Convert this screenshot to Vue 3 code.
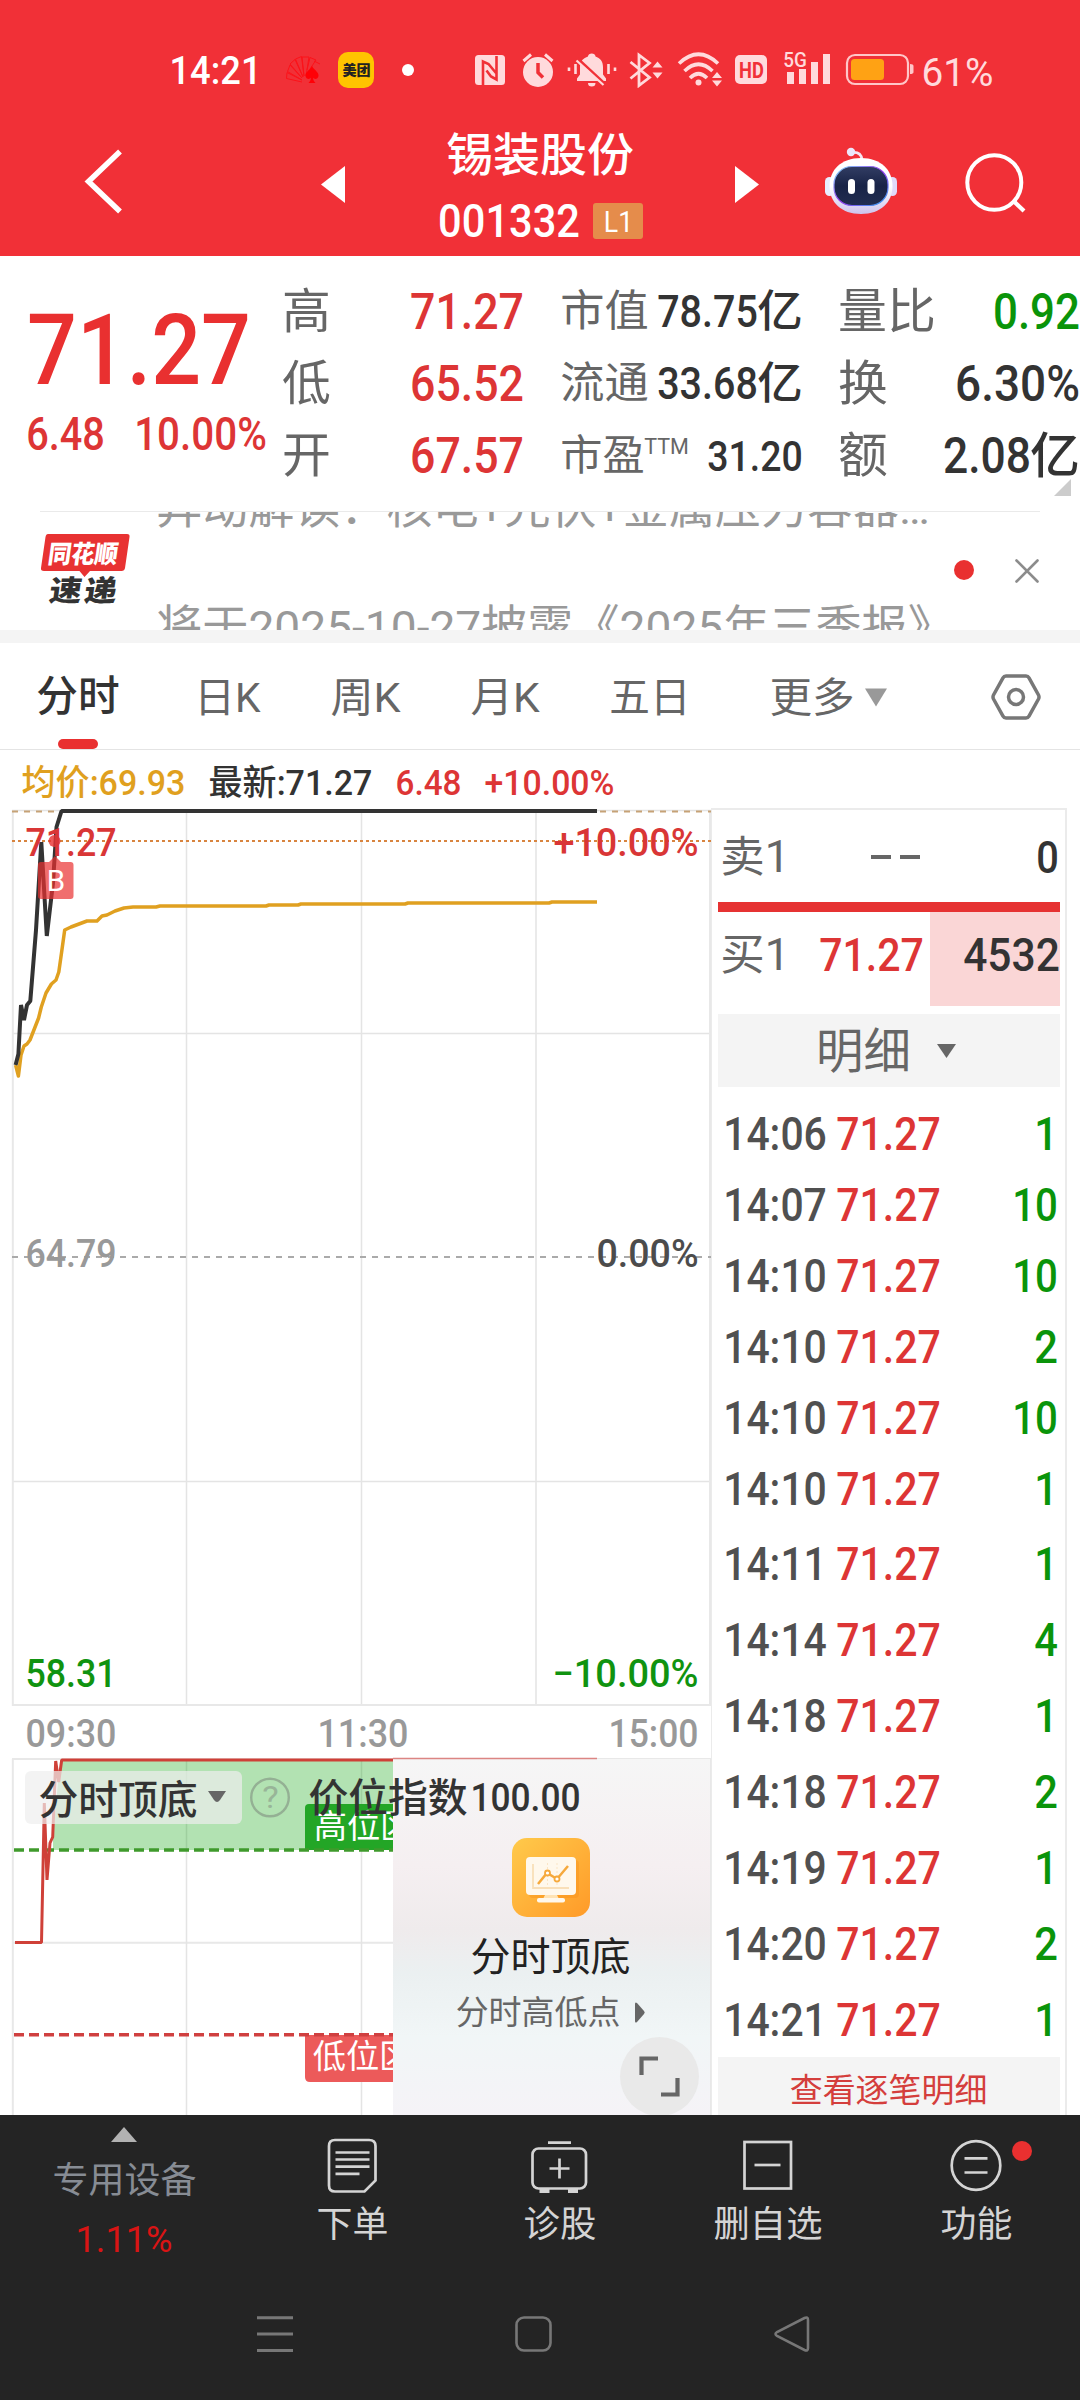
<script setup>
import { h } from 'vue'

// SVG text with a fixed visible width; c is the vertical centre of the glyphs
const Txt = (p) =>
  h('text', {
    x: +p.x - p.s * 0.04,
    y: +p.c + p.s * 0.355,
    textLength: +p.w + p.s * 0.08,
    lengthAdjust: 'spacingAndGlyphs',
    'font-size': p.s,
    fill: p.f || 'currentColor',
    'font-weight': p.b || undefined
  }, p.t)

// The same text in a box of its own, for use in flow layout
const Fit = (p) =>
  h('svg', { width: p.w, height: p.s, overflow: 'visible', display: 'block' },
    [Txt({ ...p, x: 0, c: p.s / 2 })])

const trades = [
  ['14:06', 1], ['14:07', 10], ['14:10', 10], ['14:10', 2], ['14:10', 10], ['14:10', 1],
  ['14:11', 1], ['14:14', 4], ['14:18', 1], ['14:18', 2], ['14:19', 1], ['14:20', 2], ['14:21', 1]
]
const tabs = [
  { t: '日K', w: 63 }, { t: '周K', w: 67 }, { t: '月K', w: 66 }, { t: '五日', w: 78 }
]
const price = '15.6,1065 18.4,1054 21,1005 24,1020 27,1005 30.3,1001 36,930 41.3,842 46.8,936 53,883 56.5,827 61.5,811 597,811'
const average = '15.6,1065 18.4,1076 21,1055 24,1046 27,1044 30,1040 38.6,1018 41.3,1007 46,993 51.4,984 56,980 58.8,972 61.5,953 64.7,930 71,927 87,921 97,921 102,916 107,915 115,911 124,908 133,907 156,907 160,906 266,906 269,905 298,905 301,904 405,904 408,903 549,903 552,902 597,902'
const index = '15,1942.5 41.5,1942.5 44.3,1803 47,1880 50,1843 52.7,1837 55.7,1761 58.7,1782 61.7,1760 393,1760'
</script>

<template>
  <div class="phone">
    <header class="top">
      <div class="status">
        <Fit class="clock" t="14:21" :w="89" :s="38" b="500" />
        <svg class="cards" width="36" height="30" viewBox="285 56 36 30">
          <g fill="none" stroke="#fc1219" stroke-width="1" stroke-linejoin="round">
            <path d="M302 83 286.500 79.500 287 73.500 302 81" />
            <path d="M302 81 287.500 72.500 290 66 302 79" />
            <path d="M302 79 290 65 295 60.500 303 78" />
            <path d="M303 78 295.500 60 301.500 57.500 304 77" />
            <path d="M304 77 302 58 309 58 306 77" />
            <path d="M307 71 310 58.500 316 61 310 70" />
            <path d="M314 62 320 65" />
          </g>
          <path fill="#ff0006" d="M312 67c2 4 7 6 6.500 10-.5 3-4 4-5.500 1.500 0 2 1 4 2.500 5.500h-7c1.500-1.500 2.500-3.500 2.500-5.500-1.500 2.500-5 1.500-5.500-1.500-.5-4 4.500-6 6.500-10z" />
        </svg>
        <span class="meituan"><Fit t="美团" :w="27" :s="14" b="900" /></span>
        <i class="more-dot"></i>
        <svg width="30" height="30" viewBox="475 54 30 30" class="nfc">
          <rect x="475" y="54" width="30" height="30" rx="3.500" fill="#ffdadc" />
          <path d="M483 83V60.500L488.500 63 496 72M496.500 55V78.500L491 75.500 486.500 69.500M483 84v-20" fill="none" stroke="#f13037" stroke-width="2.600" />
        </svg>
        <svg width="34" height="36" viewBox="521 51 34 36" class="alarm">
          <circle cx="538" cy="71" r="15" fill="#ffdadc" />
          <path d="M538 62v9.500l5 5" fill="none" stroke="#f13037" stroke-width="3.500" />
          <path d="M523.500 60l7.500-6.500M552.500 60l-7.500-6.500" stroke="#ffdadc" stroke-width="3" />
        </svg>
        <svg width="50" height="36" viewBox="567 51 50 36" class="bell">
          <path fill="#ffdadc" d="M577 80v-2.500l3-4V66c0-6 3.500-9 8-10.500 0-4 7.500-4 7.500 0 4.500 1.500 7.500 4.500 7.500 10.500v7.500l3 4V80zM588 82h7.500a3.700 3.500 0 0 1-7.500 0z" />
          <path d="M577.500 57.500l28 26" stroke="#f13037" stroke-width="3" />
          <path d="M576.500 59.500l27 24.500" stroke="#ffdadc" stroke-width="2.200" />
          <path d="M575.500 63v10M608.500 63v10M569 66.500v3.500M615 66.500v3.500" stroke="#ffdadc" stroke-width="2.600" />
        </svg>
        <svg width="36" height="36" viewBox="628 51 36 36" class="bt">
          <path d="M630.500 61l19 15.500-10.500 8V54l10.500 8-19 15.500" fill="none" stroke="#ffdadc" stroke-width="2.800" />
          <path fill="#ffdadc" d="M652.500 66.500l5-6 5 6zM652.500 71.500l5 6 5-6z" />
        </svg>
        <svg width="46" height="36" viewBox="677 51 46 36" class="wifi">
          <g fill="none" stroke="#ffdadc" stroke-width="3.600">
            <path d="M679 62.500q19.500-18.500 39 0" /><path d="M684.500 70q14-13.500 28 0" /><path d="M690 77q8.500-8.500 17 0" />
          </g>
          <circle cx="698.500" cy="81.500" r="3" fill="#ffdadc" />
          <path fill="#ffdadc" d="M712 77l5-6 5 6zM712 79.500l5 6 5-6z" />
        </svg>
        <span class="hd"><Fit t="HD" :w="23" :s="22" b="700" /></span>
        <svg width="48" height="36" viewBox="783 50 48 36" class="signal">
          <Txt t="5G" x="784" c="60" w="22" s="20" f="#ffdadc" b="500" />
          <path fill="#ffdadc" d="M787 72h7v12h-7zM799 69h7v15h-7zM811 62h7v22h-7zM823 54h7v30h-7z" />
        </svg>
        <svg width="69" height="33" viewBox="845 53 69 33" class="battery">
          <rect x="847" y="55" width="61" height="29" rx="8" fill="none" stroke="#ffc6c8" stroke-width="2.200" />
          <rect x="851" y="59" width="33" height="21" rx="3.500" fill="#ffa214" />
          <path fill="#ffc6c8" d="M910 64q3.500 0 3.500 2v6q0 2-3.500 2z" />
        </svg>
        <Fit class="percent" t="61%" :w="69" :s="38" />
      </div>

      <div class="title-bar">
        <svg width="40" height="68" viewBox="84 148 40 68" class="back">
          <path d="M120 151.500 88.500 181.500 120 211.500" fill="none" stroke="#fff" stroke-width="5.500" />
        </svg>
        <svg width="24" height="37" viewBox="0 0 24 37" class="prev"><path d="M24 0v37L0 18.500z" fill="#fff" /></svg>
        <div class="name">
          <Fit t="锡装股份" :w="184" :s="46" b="500" />
          <div class="code">
            <Fit t="001332" :w="138" :s="47" b="500" />
            <span class="l1"><Fit t="L1" :w="27" :s="30" /></span>
          </div>
        </div>
        <svg width="24" height="37" viewBox="0 0 24 37" class="next"><path d="M0 0v37l24-18.500z" fill="#fff" /></svg>
        <svg width="74" height="68" viewBox="824 147 74 68" class="robot">
          <defs>
            <linearGradient id="shell" x1="0" y1="0" x2="0" y2="1"><stop offset=".5" stop-color="#fff" /><stop offset="1" stop-color="#cdc3ec" /></linearGradient>
            <linearGradient id="rim" x1="0" y1="0" x2="1" y2="1"><stop offset="0" stop-color="#7bdcf5" /><stop offset=".5" stop-color="#9b3cf0" /><stop offset="1" stop-color="#2ca8ef" /></linearGradient>
            <linearGradient id="visor" x1="0" y1="0" x2="0" y2="1"><stop offset="0" stop-color="#323d63" /><stop offset=".5" stop-color="#182347" /><stop offset="1" stop-color="#222d50" /></linearGradient>
          </defs>
          <path d="M852 152.500q9-1 10 7" fill="none" stroke="#f6e6f2" stroke-width="2.600" />
          <circle cx="851" cy="152" r="4.200" fill="#ece6fa" />
          <rect x="825" y="177" width="9" height="19" rx="4.500" fill="#e8edff" />
          <rect x="888" y="177" width="9" height="19" rx="4.500" fill="#e0dafa" />
          <path d="M861 158c20 0 31.500 12 31.500 28S881 214 861 214s-31.500-12-31.500-28S841 158 861 158z" fill="url(#shell)" />
          <rect x="834" y="166.500" width="54" height="39" rx="18" fill="url(#visor)" stroke="url(#rim)" stroke-width="1.200" />
          <rect x="848" y="179" width="7" height="15" rx="3.500" fill="#fff" /><rect x="867.500" y="179" width="7" height="15" rx="3.500" fill="#fff" />
        </svg>
        <svg width="62" height="62" viewBox="964 152 62 62" class="search">
          <ellipse cx="994.300" cy="182.500" rx="27" ry="27.300" fill="none" stroke="#fff" stroke-width="4" />
          <path d="M1013 200.500 1024 211" stroke="#fff" stroke-width="4.200" />
        </svg>
      </div>
    </header>

    <section class="quote">
      <div class="last">
        <Fit t="71.27" :w="216" :s="98" b="500" />
        <div class="change">
          <Fit t="6.48" :w="75" :s="46" b="500" /><Fit t="10.00%" :w="129" :s="46" b="500" />
        </div>
      </div>
      <div class="stats c1">
        <div><Fit class="lab" t="高" :w="45" :s="48" /><Fit class="red" t="71.27" :w="110" :s="50" b="500" /></div>
        <div><Fit class="lab" t="低" :w="45" :s="48" /><Fit class="red" t="65.52" :w="110" :s="50" b="500" /></div>
        <div><Fit class="lab" t="开" :w="45" :s="48" /><Fit class="red" t="67.57" :w="110" :s="50" b="500" /></div>
      </div>
      <div class="stats c2">
        <div><Fit class="lab" t="市值" :w="85" :s="43.5" /><span><Fit t="78.75" :w="97" :s="45" b="500" /><Fit t="亿" :w="42" :s="44" b="500" /></span></div>
        <div><Fit class="lab" t="流通" :w="85" :s="43.5" /><span><Fit t="33.68" :w="97" :s="45" b="500" /><Fit t="亿" :w="42" :s="44" b="500" /></span></div>
        <div><span class="lab pe"><Fit t="市盈" :w="81" :s="42" /><Fit class="ttm" t="TTM" :w="43" :s="21.5" /></span><Fit t="31.20" :w="92" :s="43" b="500" /></div>
      </div>
      <div class="stats c3">
        <div><Fit class="lab" t="量比" :w="94" :s="48" /><Fit class="green" t="0.92" :w="83" :s="50" b="500" /></div>
        <div><Fit class="lab" t="换" :w="46" :s="48" /><Fit t="6.30%" :w="121" :s="50" b="500" /></div>
        <div><Fit class="lab" t="额" :w="46" :s="48" /><span><Fit t="2.08" :w="84" :s="50" b="500" /><Fit t="亿" :w="46" :s="49" b="500" /></span></div>
      </div>
      <i class="corner"></i>
    </section>

    <section class="news">
      <svg class="logo" width="90" height="74" viewBox="40 533 90 74">
        <path fill="#e83232" d="M48 534h79q3 0 2.500 3l-4.500 31q-.5 3-3.500 3H90l-5.500 6-5-6H44q-3.500 0-3-3l4.500-31q.5-3 2.500-3z" />
        <g transform="translate(51 0) skewX(-8) translate(26 0)"><Txt t="同花顺" x="50" c="554" w="68" s="25" f="#fff" b="900" /></g>
        <g transform="translate(51 0) skewX(-8) translate(33 0)">
          <Txt t="速" x="50" c="591" w="30" s="29" f="#333" b="900" />
          <Txt t="递" x="85" c="591" w="30" s="29" f="#333" b="900" />
        </g>
      </svg>
      <div class="lines">
        <Fit class="line-a" t="异动解读：核电+光伏+金属压力容器…" :w="770" :s="45" />
        <Fit class="line-b" t="将于2025-10-27披露《2025年三季报》" :w="794" :s="45" />
      </div>
      <i class="unread"></i>
      <svg width="24" height="24" viewBox="0 0 24 24" class="close"><path d="M1.500 1.500l21 21M22.500 1.500l-21 21" stroke="#8c8c8c" stroke-width="2.600" stroke-linecap="round" /></svg>
    </section>

    <nav class="tabs">
      <div class="tab on"><Fit t="分时" :w="80" :s="41.5" b="500" /></div>
      <Fit v-for="t in tabs" :key="t.t" :t="t.t" :w="t.w" :s="41" />
      <span class="more"><Fit t="更多" :w="82" :s="41" /><svg width="22" height="19" viewBox="0 0 23 19"><path d="M0 0h23L11.500 19z" fill="#999" /></svg></span>
      <svg width="50" height="46" viewBox="0 0 50 46" class="hex">
        <path d="M15 2h20q2 0 3 1.800l9.500 17.200q1 2 0 4L38 42.200q-1 1.800-3 1.800H15q-2 0-3-1.800L2.500 25q-1-2 0-4L12 3.800Q13 2 15 2z" fill="none" stroke="#777" stroke-width="3.500" />
        <circle cx="25" cy="23" r="7.500" fill="none" stroke="#777" stroke-width="3.500" />
      </svg>
    </nav>

    <main class="main">
      <div class="left">
        <div class="info">
          <Fit class="gold" t="均价:69.93" :w="161" :s="35.5" b="500" />
          <Fit t="最新:71.27" :w="161" :s="35.5" b="500" />
          <Fit class="red" t="6.48" :w="63" :s="35.5" b="500" />
          <Fit class="red" t="+10.00%" :w="127" :s="35.5" b="500" />
        </div>
        <svg class="chart" width="711" height="1307" viewBox="0 808 711 1307">
          <defs>
            <linearGradient id="card" x1="0" y1="0" x2="0" y2="1">
              <stop offset="0" stop-color="#f6f6f6" /><stop offset=".3" stop-color="#f5eff1" /><stop offset=".48" stop-color="#efebec" />
              <stop offset=".6" stop-color="#ebf0f1" /><stop offset=".78" stop-color="#f1f6f7" /><stop offset="1" stop-color="#f5f3f7" />
            </linearGradient>
            <linearGradient id="orange" x1="0" y1="0" x2="1" y2="1"><stop offset="0" stop-color="#ffca4b" /><stop offset="1" stop-color="#ff9a28" /></linearGradient>
          </defs>
          <g stroke="#e4e4e4" stroke-width="1.500" fill="none">
            <path d="M12 810.500H711M12 1033.500H711M12 1481.500H711M186.500 811V1705M361.500 811V1705M536 811V1705" />
            <path d="M12.800 810V1705H710V810" stroke-width="2" stroke="#e8e8e8" />
            <path d="M12 1759H711M12.800 1759V2115M710 1759V2115M12 1942.700H393" stroke-width="2" stroke="#e8e8e8" />
            <path d="M186.500 1759V2115M361.500 1759V2115" />
          </g>
          <path d="M12 811.500H711" stroke="#c6a276" stroke-width="2" stroke-dasharray="6 6" />
          <path d="M12 841H711" stroke="#d8843f" stroke-width="2" stroke-dasharray="3 3" />
          <path d="M12 1257H711" stroke="#aaa" stroke-width="2" stroke-dasharray="6 6" />
          <polyline :points="average" fill="none" stroke="#e0a020" stroke-width="3.500" stroke-linejoin="round" />
          <polyline :points="price" fill="none" stroke="#333" stroke-width="4" stroke-linejoin="bevel" />
          <circle cx="54.500" cy="841" r="6" fill="#e93030" opacity=".8" />
          <path d="M41 862h8l6-6 6 6h9.500q3 0 3 3v31q0 3-3 3H41q-3 0-3-3v-31q0-3 3-3z" fill="#e93030" opacity=".7" />
          <Txt t="B" x="48" c="880.500" w="16" s="30" f="#fff" />
          <g font-weight="500">
            <Txt t="71.27" x="27" c="842" w="88" s="39" f="#d93636" />
            <Txt t="+10.00%" x="555" c="842" w="142" s="39" f="#d93636" />
            <Txt t="64.79" x="27" c="1253" w="88" s="39" f="#999" />
            <Txt t="0.00%" x="598" c="1253" w="99" s="39" f="#4c4c4c" />
            <Txt t="58.31" x="27" c="1673" w="88" s="39" f="#109310" />
            <Txt t="−10.00%" x="554" c="1673" w="143" s="39" f="#109310" />
            <Txt t="09:30" x="27" c="1733.500" w="88" s="38" f="#999" />
            <Txt t="11:30" x="319" c="1733.500" w="88" s="38" f="#999" />
            <Txt t="15:00" x="610" c="1733.500" w="87" s="38" f="#999" />
          </g>

          <path d="M53 1850 53 1837 58 1782 61.700 1760H393V1850z" fill="#00a000" opacity=".3" />
          <path d="M309 1804H393V1850H305V1808q0-4 4-4z" fill="#23a626" />
          <path d="M305 2035H393V2082H310q-5 0-5-5z" fill="#ec5a5a" />
          <Txt t="高位区" x="315" c="1826.500" w="97" s="33" f="#fff" />
          <Txt t="低位区" x="314" c="2056.500" w="97" s="33" f="#fff" />
          <path d="M14 1850H393" stroke="#3f9a2c" stroke-width="3.500" stroke-dasharray="10 5" />
          <path d="M14 2034.700H393" stroke="#d04040" stroke-width="3.500" stroke-dasharray="10 5" />
          <polyline :points="index" fill="none" stroke="#cf4038" stroke-width="3" stroke-linejoin="bevel" />
          <rect x="393" y="1759" width="317" height="356" fill="url(#card)" />
          <path d="M393 1758.500H597" stroke="#dc8583" stroke-width="1.500" />
          <rect x="25" y="1771" width="217" height="53" rx="6" fill="#eee" opacity=".7" />
          <Txt t="分时顶底" x="40" c="1800" w="156" s="39.5" f="#333" b="500" />
          <path d="M208 1791h18l-6 9q-3 4-6 0z" fill="#666" />
          <circle cx="270" cy="1797.500" r="18.800" fill="none" stroke="#666" stroke-opacity=".4" stroke-width="2.400" />
          <Txt t="?" x="263.500" c="1797" w="14" s="31" f="#98b598" />
          <Txt t="价位指数" x="310" c="1797.500" w="156" s="39.5" f="#333" b="500" />
          <Txt t="100.00" x="472" c="1797" w="107" s="39" f="#333" b="500" />

          <rect x="512" y="1838" width="78" height="79" rx="15" fill="url(#orange)" />
          <rect x="529" y="1860" width="50" height="38" rx="4" fill="#f58c14" opacity=".35" />
          <rect x="526" y="1857" width="50" height="38" rx="4" fill="#fff8ec" />
          <path d="M545 1895h12l2 4h-16z" fill="#ffe3b4" /><rect x="537" y="1898" width="28" height="4.500" rx="2" fill="#fff8ec" />
          <path d="M533 1864v24h36" fill="none" stroke="#f9dfb8" stroke-width="1.800" />
          <path d="M538 1884l9-11 10 6 11-13" fill="none" stroke="#f6a93c" stroke-width="2.500" />
          <path d="M547.500 1863v24M557 1863v24" stroke="#fae5c6" stroke-width="1" stroke-dasharray="2 2" />
          <circle cx="547.500" cy="1873" r="2.500" fill="#fff" stroke="#f6a93c" stroke-width="1.800" /><circle cx="557" cy="1879" r="2.500" fill="#fff" stroke="#f6a93c" stroke-width="1.800" />
          <Txt t="分时顶底" x="472" c="1957" w="157" s="39.5" f="#222" />
          <Txt t="分时高低点" x="457" c="2012.500" w="162" s="33" f="#666" />
          <path d="M635 2004q0-2.500 2-1l7 8q1.500 1.500 0 3l-7 8q-2 1.500-2-1z" fill="#666" />
          <circle cx="659.500" cy="2076.500" r="39.500" fill="#e9e9e9" />
          <path d="M641.500 2075v-16.500H658M661 2094.500h16.500V2078" fill="none" stroke="#666" stroke-width="4.200" />
        </svg>
      </div>

      <aside class="book">
        <div class="level">
          <Fit class="lab" t="卖1" :w="66" :s="43.5" /><span class="dashes"><i></i><i></i></span><Fit t="0" :w="19" :s="45" b="500" />
        </div>
        <div class="ratio"></div>
        <div class="level buy">
          <Fit class="lab" t="买1" :w="66" :s="43.5" /><Fit class="red bid" t="71.27" :w="101" :s="46" b="500" /><span class="vol"><Fit t="4532" :w="93" :s="46" b="500" /></span>
        </div>
        <div class="detail">
          <Fit t="明细" :w="91" :s="47.5" /><svg width="19" height="14" viewBox="0 0 19 14"><path d="M0 0h19L9.500 14z" fill="#666" /></svg>
        </div>
        <div class="trades">
          <div v-for="(r, i) in trades" :key="i" class="trade" :class="{ tall: i > 5 }">
            <Fit class="time" :t="r[0]" :w="100" :s="46" b="500" />
            <Fit class="red" t="71.27" :w="101" :s="46" b="500" />
            <Fit class="green qty" :t="String(r[1])" :w="r[1] > 9 ? 42 : 20" :s="46" b="500" />
          </div>
        </div>
        <div class="all"><Fit t="查看逐笔明细" :w="195" :s="33" /></div>
      </aside>
    </main>

    <footer class="bottom">
      <div class="actions">
        <div class="device">
          <svg width="26" height="15" viewBox="0 0 26 15"><path d="M13 0l13 15H0z" fill="#b2b2b2" /></svg>
          <Fit class="dev" t="专用设备" :w="141" :s="36" />
          <Fit class="pct" t="1.11%" :w="94" :s="37" />
        </div>
        <div class="action">
          <svg width="56" height="60" viewBox="324 2136 56 60" fill="none" stroke="#d4d4d4" stroke-width="2.700">
            <path d="M335 2140h34q6.500 0 6.500 6v34.500L364.500 2191.500H335q-6 0-6-6V2146q0-6 6-6z" /><path d="M335.500 2152.500h34M335.500 2159.500h34M335.500 2166.700h34M335.500 2173.800h24" />
          </svg>
          <Fit t="下单" :w="69" :s="36" />
        </div>
        <div class="action">
          <svg width="60" height="60" viewBox="530 2136 60 60" fill="none" stroke="#d4d4d4" stroke-width="2.700">
            <rect x="532.500" y="2148.500" width="53.500" height="40" rx="6" /><path d="M548 2142.700h23M559.500 2158.500v20M549.500 2168.500h20" /><path d="M539.500 2191h10M568 2191h10" stroke-width="4" />
          </svg>
          <Fit t="诊股" :w="70" :s="36" />
        </div>
        <div class="action">
          <svg width="56" height="60" viewBox="739.500 2136 56 60" fill="none" stroke="#d4d4d4" stroke-width="2.700">
            <rect x="744" y="2142" width="46.500" height="46.500" /><path d="M754 2165h26" />
          </svg>
          <Fit t="删自选" :w="106" :s="36" />
        </div>
        <div class="action">
          <svg width="56" height="60" viewBox="947.500 2136 56 60" fill="none" stroke="#d4d4d4" stroke-width="2.700">
            <circle cx="975.500" cy="2165.500" r="24.300" /><path d="M964 2158.300h23M964 2172.500h23" />
          </svg>
          <Fit t="功能" :w="69" :s="36" />
          <i class="badge"></i>
        </div>
      </div>
      <div class="system">
        <svg width="36" height="36" viewBox="0 0 36 36" stroke="#777" stroke-width="3"><path d="M0 1.800h36M0 18h36M0 34.500h36" /></svg>
        <svg width="37" height="36" viewBox="0 0 37 36" fill="none" stroke="#777" stroke-width="2.600"><rect x="1.500" y="1.500" width="34" height="33" rx="7.500" /></svg>
        <svg width="36" height="36" viewBox="0 0 36 36" fill="none" stroke="#777" stroke-width="2.600"><path d="M30.500 2Q34 .5 34 4v28q0 3.500-3.500 2L3 20q-3-2 0-4z" /></svg>
      </div>
    </footer>
  </div>
</template>

<style>
body { background: #fff; }
</style>

<style scoped>
.phone { width: 1080px; height: 2400px; overflow: hidden; background: #fff; color: #333; font-family: Roboto, "Noto Sans CJK SC", sans-serif; display: flex; flex-direction: column; }
svg { display: block; flex: none; }
i { display: block; flex: none; }
.red { color: #dd3535; }
.green { color: #0a940a; }
.gold { color: #e0a01e; }
.lab { color: #666; }

.top { height: 256px; background: #f13037; color: #fff; }
.status { height: 114px; padding: 25px 0 0 171px; box-sizing: border-box; display: flex; align-items: center; }
.cards { margin-left: 25px; }
.meituan { width: 36px; height: 36px; margin-left: 17px; border-radius: 10px; background: #ffc400; color: #222; display: flex; align-items: center; justify-content: center; }
.more-dot { width: 12px; height: 12px; border-radius: 50%; background: #fff; margin-left: 28px; }
.nfc { margin-left: 61px; }
.alarm { margin-left: 16px; }
.bell { margin-left: 12px; }
.bt { margin-left: 11px; }
.wifi { margin-left: 13px; }
.hd { width: 32px; height: 29px; margin-left: 12px; border-radius: 5px; background: #ffdadc; color: #f13037; display: flex; align-items: center; justify-content: center; }
.signal { margin-left: 16px; margin-top: -3px; }
.battery { margin-left: 14px; }
.percent { margin-left: 9px; margin-top: 4px; color: #ffdadc; }
.title-bar { display: flex; align-items: flex-start; padding-left: 84px; }
.back { margin-top: 34px; }
.prev { margin: 52px 0 0 197px; }
.name { width: 203px; margin: 18px 0 0 95px; display: flex; flex-direction: column; align-items: center; gap: 19px; }
.name > svg { margin-right: 3px; }
.code { display: flex; align-items: center; gap: 15px; }
.l1 { width: 50px; height: 36px; border-radius: 3px; background: #e58c4b; display: flex; align-items: center; justify-content: center; }
.next { margin: 52px 0 0 92px; }
.robot { margin: 33px 0 0 65px; }
.search { margin: 38px 0 0 66px; }

.quote { height: 255px; display: flex; padding-top: 19px; box-sizing: border-box; position: relative; }
.last { width: 253px; padding: 25px 0 0 31px; color: #e93030; }
.change { display: flex; gap: 33px; margin: 13px 0 0 -3px; color: #dd3535; }
.stats > div { height: 72px; display: flex; align-items: center; justify-content: space-between; }
.stats span { display: flex; align-items: center; gap: 3px; }
.c1 { width: 238px; }
.c2 { width: 239px; margin-left: 40px; }
.c3 { width: 238px; margin-left: 39px; }
.pe .ttm { margin: -16px 0 0 -1px; }
.corner { position: absolute; right: 9px; top: 223px; border-style: solid; border-width: 0 0 17px 17px; border-color: transparent transparent #ccc transparent; }

.news { height: 132px; box-sizing: border-box; border-bottom: 13px solid #f4f4f4; display: flex; align-items: flex-start; overflow: hidden; }
.logo { margin: 22px 0 0 40px; }
.lines { width: 777px; height: 119px; margin-left: 28px; color: #999; overflow: hidden; }
.line-a { margin-top: -25px; }
.line-b { margin-top: 74px; }
.news::before { content: ""; position: absolute; left: 40px; top: 511px; width: 1000px; height: 1px; background: #eaeaea; }
.unread { width: 20px; height: 20px; border-radius: 50%; background: #e93030; margin: 49px 0 0 19px; }
.close { margin: 48px 0 0 41px; }

.tabs { height: 107px; box-sizing: border-box; border-bottom: 1px solid #e4e4e4; padding: 2px 0 0 38px; display: flex; align-items: center; color: #666; }
.tab { position: relative; margin-right: 78px; color: #333; }
.tab::after { content: ""; position: absolute; left: 20px; bottom: -31px; width: 40px; height: 10px; border-radius: 5px; background: #e93030; }
.tabs > svg { margin-right: 73px; }
.more { display: flex; align-items: center; gap: 12px; margin: 0 104px 0 9px; }
.tabs .hex { margin: 0; }

.main { height: 1365px; display: flex; overflow: hidden; }
.left { width: 711px; }
.info { height: 58px; padding: 7px 0 0 23px; box-sizing: border-box; display: flex; align-items: center; gap: 26px; }
.book { width: 356px; height: 1320px; margin-top: 58px; box-sizing: border-box; border: solid #ebebeb; border-width: 2px 2px 0 1px; padding: 0 5px 0 6px; display: flex; flex-direction: column; }
.book > div { flex: none; }
.level { height: 92px; display: flex; align-items: center; padding: 2px 3px 0 4px; box-sizing: border-box; justify-content: space-between; }
.dashes { display: flex; gap: 9px; margin-left: -36px; }
.dashes i { width: 20px; height: 4px; background: #666; }
.ratio { height: 10px; background: #e63232; }
.level.buy { height: 94px; padding: 0 0 0 4px; }
.bid { margin-left: 25px; }
.vol { width: 130px; height: 94px; box-sizing: border-box; padding: 0 2px 8px 0; background: #fad6d6; display: flex; align-items: center; justify-content: flex-end; }
.level.buy > svg { position: relative; top: -4px; }
.detail { height: 73px; margin-top: 8px; background: #f4f4f4; color: #666; display: flex; align-items: center; gap: 28px; padding-left: 100px; }
.trades { padding: 11px 4px 0 7px; color: #505050; }
.trade { height: 71px; display: flex; align-items: center; gap: 13px; }
.trade.tall { height: 76px; position: relative; top: 2px; }
.qty { margin-left: auto; }
.all { margin-top: 1px; height: 80px; background: #f4f4f4; color: #d43e3c; padding: 17px 0 0 73px; }

.bottom { height: 285px; flex: none; background: #242424; color: #d4d4d4; }
.actions { height: 170px; display: flex; }
.device { width: 248px; display: flex; flex-direction: column; align-items: center; padding-top: 12px; }
.dev { color: #878c94; margin-top: 20px; }
.pct { color: #d91414; margin-top: 22px; }
.action { width: 208px; display: flex; flex-direction: column; align-items: center; padding-top: 21px; gap: 10px; position: relative; }
.badge { position: absolute; width: 20px; height: 20px; border-radius: 50%; background: #e93030; left: 140px; top: 26px; }
.system { display: flex; gap: 222px; padding: 31px 0 0 257px; }
</style>
